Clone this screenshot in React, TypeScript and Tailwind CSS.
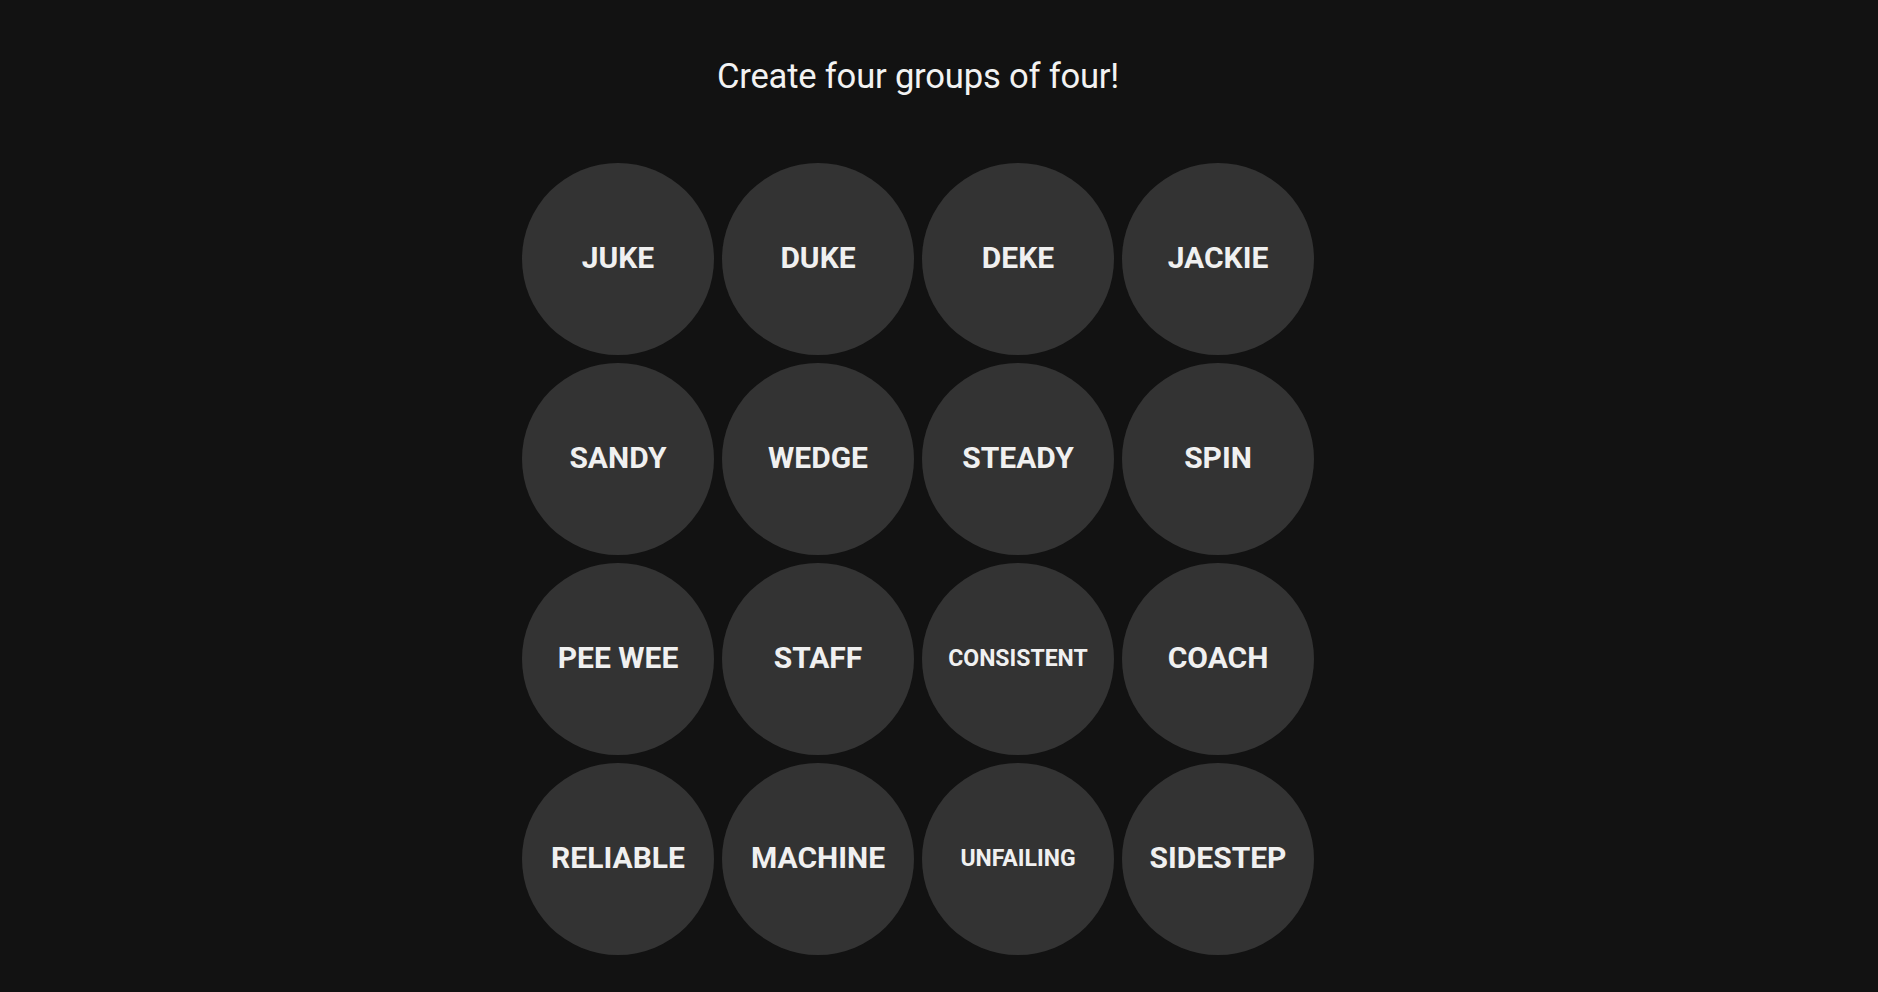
import React, { useState } from 'react';

interface Tile {
  word: string;
  small?: boolean;
}

const tiles: Tile[] = [
  { word: 'JUKE' },
  { word: 'DUKE' },
  { word: 'DEKE' },
  { word: 'JACKIE' },
  { word: 'SANDY' },
  { word: 'WEDGE' },
  { word: 'STEADY' },
  { word: 'SPIN' },
  { word: 'PEE WEE' },
  { word: 'STAFF' },
  { word: 'CONSISTENT', small: true },
  { word: 'COACH' },
  { word: 'RELIABLE' },
  { word: 'MACHINE' },
  { word: 'UNFAILING', small: true },
  { word: 'SIDESTEP' },
];

const App: React.FC = () => {
  const [selected, setSelected] = useState<string[]>([]);

  const toggle = (word: string) => {
    setSelected((prev) => {
      if (prev.includes(word)) return prev.filter((w) => w !== word);
      if (prev.length >= 4) return prev;
      return [...prev, word];
    });
  };

  return (
    <div className="min-h-screen w-full bg-[#121212] font-['Roboto','Liberation_Sans',sans-serif]">
      <div className="w-[1836px] flex flex-col items-center pt-[56px]">
        <h1 className="text-[34.6px] leading-[40px] font-normal text-[#f2f2f2] tracking-[-0.2px]">
          Create four groups of four!
        </h1>

        <div className="mt-[67px] grid grid-cols-4 gap-2">
          {tiles.map((tile) => {
            const isSelected = selected.includes(tile.word);
            return (
              <button
                key={tile.word}
                onClick={() => toggle(tile.word)}
                className={`w-[192px] h-[192px] rounded-full flex items-center justify-center font-bold ${
                  isSelected ? 'bg-[#5a594e] text-white' : 'bg-[#333333] text-[#f0f0f0]'
                } ${tile.small ? 'text-[23px]' : 'text-[30px] pb-[3px]'}`}
              >
                {tile.word}
              </button>
            );
          })}
        </div>
      </div>
    </div>
  );
};

export default App;
